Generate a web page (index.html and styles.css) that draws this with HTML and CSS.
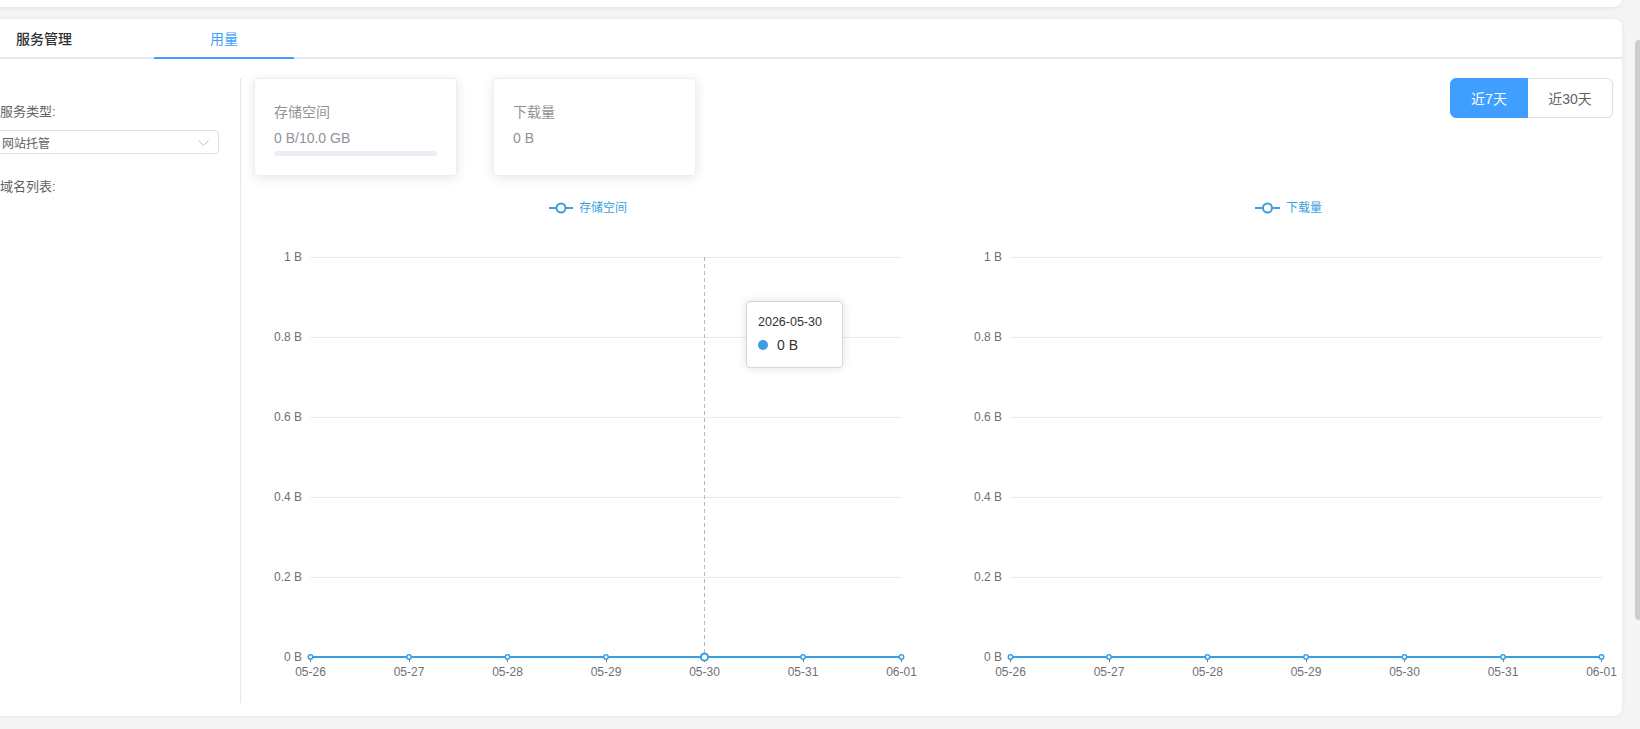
FILE: index.html
```html
<!DOCTYPE html>
<html lang="zh-CN">
<head>
    <meta charset="UTF-8">
    <meta name="viewport" content="width=device-width, initial-scale=1.0">
    <title>用量</title>
    <link rel="stylesheet" href="styles.css">
</head>
<body>
    <div class="page">
        <div class="top-card"></div>

        <div class="main-card">
            <div class="tabs">
                <div class="tab first">服务管理</div>
                <div class="tab active">用量</div>
            </div>

            <div class="usage">
                <!-- 左侧筛选 -->
                <div class="filter">
                    <div class="filter-label">服务类型:</div>
                    <div class="select">
                        <span>网站托管</span>
                        <svg class="arrow" width="11" height="6" viewBox="0 0 11 6">
                            <path d="M0.5 0.5 L5.5 5.5 L10.5 0.5" fill="none" stroke="#c0c4cc" stroke-width="1"/>
                        </svg>
                    </div>
                    <div class="filter-label domain">域名列表:</div>
                </div>

                <!-- 右侧统计 -->
                <div class="stats">
                    <div class="stats-head">
                        <div class="cards">
                            <div class="stat-card">
                                <div class="stat-title">存储空间</div>
                                <div class="stat-value">0 B/10.0 GB</div>
                                <div class="progress"><div class="progress-inner" style="width: 0%"></div></div>
                            </div>
                            <div class="stat-card">
                                <div class="stat-title">下载量</div>
                                <div class="stat-value">0 B</div>
                            </div>
                        </div>
                        <div class="range">
                            <button class="range-btn active">近7天</button>
                            <button class="range-btn">近30天</button>
                        </div>
                    </div>

                    <div class="charts">
                        <div class="chart">
                            <svg width="700" height="500" viewBox="0 0 700 500">
                                <g class="legend">
                                    <line x1="308" y1="22" x2="332" y2="22" stroke="#3a9fe0" stroke-width="2"/>
                                    <circle cx="320" cy="22" r="4.5" fill="#fff" stroke="#3a9fe0" stroke-width="2"/>
                                    <text x="338" y="26" fill="#3a9fe0" font-size="12">存储空间</text>
                                </g>
                                <g stroke="#e9e9ec" stroke-width="1">
                                    <line x1="69.5" y1="71.5" x2="660.5" y2="71.5"/>
                                    <line x1="69.5" y1="151.5" x2="660.5" y2="151.5"/>
                                    <line x1="69.5" y1="231.5" x2="660.5" y2="231.5"/>
                                    <line x1="69.5" y1="311.5" x2="660.5" y2="311.5"/>
                                    <line x1="69.5" y1="391.5" x2="660.5" y2="391.5"/>
                                </g>
                                <g class="y-labels" fill="#6e7079" font-size="12" text-anchor="end">
                                    <text x="61" y="75">1 B</text>
                                    <text x="61" y="155">0.8 B</text>
                                    <text x="61" y="235">0.6 B</text>
                                    <text x="61" y="315">0.4 B</text>
                                    <text x="61" y="395">0.2 B</text>
                                    <text x="61" y="475">0 B</text>
                                </g>
                                <!-- 悬停指示线 -->
                                <line x1="463.5" y1="71" x2="463.5" y2="471" stroke="#b5b8c0" stroke-width="1" stroke-dasharray="4 3"/>
                                <g stroke="#4a86c0" stroke-width="1">
                                    <line x1="69.5" y1="471" x2="69.5" y2="476"/>
                                    <line x1="168.5" y1="471" x2="168.5" y2="476"/>
                                    <line x1="266.5" y1="471" x2="266.5" y2="476"/>
                                    <line x1="365.5" y1="471" x2="365.5" y2="476"/>
                                    <line x1="463.5" y1="471" x2="463.5" y2="476"/>
                                    <line x1="562.5" y1="471" x2="562.5" y2="476"/>
                                    <line x1="660.5" y1="471" x2="660.5" y2="476"/>
                                </g>
                                <line x1="69.5" y1="471" x2="660.5" y2="471" stroke="#3a9fe0" stroke-width="2"/>
                                <g fill="#fff" stroke="#3a9fe0" stroke-width="1.5">
                                    <circle cx="69.5" cy="471" r="2.2"/>
                                    <circle cx="168" cy="471" r="2.2"/>
                                    <circle cx="266.5" cy="471" r="2.2"/>
                                    <circle cx="365" cy="471" r="2.2"/>
                                    <circle cx="463.5" cy="471" r="3.6" stroke-width="2"/>
                                    <circle cx="562" cy="471" r="2.2"/>
                                    <circle cx="660.5" cy="471" r="2.2"/>
                                </g>
                                <g class="x-labels" fill="#6e7079" font-size="12" text-anchor="middle">
                                    <text x="69.5" y="490">05-26</text>
                                    <text x="168" y="490">05-27</text>
                                    <text x="266.5" y="490">05-28</text>
                                    <text x="365" y="490">05-29</text>
                                    <text x="463.5" y="490">05-30</text>
                                    <text x="562" y="490">05-31</text>
                                    <text x="660.5" y="490">06-01</text>
                                </g>
                            </svg>
                            <div class="tooltip">
                                <div class="tooltip-date">2026-05-30</div>
                                <div class="tooltip-row"><span class="dot"></span>0 B</div>
                            </div>
                        </div>

                        <div class="chart">
                            <svg width="700" height="500" viewBox="0 0 700 500">
                                <g class="legend">
                                    <line x1="314" y1="22" x2="339" y2="22" stroke="#3a9fe0" stroke-width="2"/>
                                    <circle cx="326.5" cy="22" r="4.5" fill="#fff" stroke="#3a9fe0" stroke-width="2"/>
                                    <text x="345" y="26" fill="#3a9fe0" font-size="12">下载量</text>
                                </g>
                                <g stroke="#e9e9ec" stroke-width="1">
                                    <line x1="69.5" y1="71.5" x2="661" y2="71.5"/>
                                    <line x1="69.5" y1="151.5" x2="661" y2="151.5"/>
                                    <line x1="69.5" y1="231.5" x2="661" y2="231.5"/>
                                    <line x1="69.5" y1="311.5" x2="661" y2="311.5"/>
                                    <line x1="69.5" y1="391.5" x2="661" y2="391.5"/>
                                </g>
                                <g class="y-labels" fill="#6e7079" font-size="12" text-anchor="end">
                                    <text x="61" y="75">1 B</text>
                                    <text x="61" y="155">0.8 B</text>
                                    <text x="61" y="235">0.6 B</text>
                                    <text x="61" y="315">0.4 B</text>
                                    <text x="61" y="395">0.2 B</text>
                                    <text x="61" y="475">0 B</text>
                                </g>
                                <g stroke="#4a86c0" stroke-width="1">
                                    <line x1="69.5" y1="471" x2="69.5" y2="476"/>
                                    <line x1="168.5" y1="471" x2="168.5" y2="476"/>
                                    <line x1="266.5" y1="471" x2="266.5" y2="476"/>
                                    <line x1="365.5" y1="471" x2="365.5" y2="476"/>
                                    <line x1="463.5" y1="471" x2="463.5" y2="476"/>
                                    <line x1="562.5" y1="471" x2="562.5" y2="476"/>
                                    <line x1="660.5" y1="471" x2="660.5" y2="476"/>
                                </g>
                                <line x1="69.5" y1="471" x2="660.5" y2="471" stroke="#3a9fe0" stroke-width="2"/>
                                <g fill="#fff" stroke="#3a9fe0" stroke-width="1.5">
                                    <circle cx="69.5" cy="471" r="2.2"/>
                                    <circle cx="168" cy="471" r="2.2"/>
                                    <circle cx="266.5" cy="471" r="2.2"/>
                                    <circle cx="365" cy="471" r="2.2"/>
                                    <circle cx="463.5" cy="471" r="2.2"/>
                                    <circle cx="562" cy="471" r="2.2"/>
                                    <circle cx="660.5" cy="471" r="2.2"/>
                                </g>
                                <g class="x-labels" fill="#6e7079" font-size="12" text-anchor="middle">
                                    <text x="69.5" y="490">05-26</text>
                                    <text x="168" y="490">05-27</text>
                                    <text x="266.5" y="490">05-28</text>
                                    <text x="365" y="490">05-29</text>
                                    <text x="463.5" y="490">05-30</text>
                                    <text x="562" y="490">05-31</text>
                                    <text x="660.5" y="490">06-01</text>
                                </g>
                            </svg>
                        </div>
                    </div>
                </div>
            </div>
        </div>
    </div>

    <div class="scroll-track"><div class="scroll-thumb"></div></div>
</body>
</html>
```

FILE: styles.css
```css
* {
    margin: 0;
    padding: 0;
    box-sizing: border-box;
}

body {
    font-family: 'Liberation Sans', 'Noto Sans CJK SC', sans-serif;
    background: #f5f5f5;
    width: 1640px;
    height: 729px;
    overflow: hidden;
    display: flex;
    color: #606266;
}

/* 页面向左滚动了一点，卡片左边缘在视口外 */
.page {
    width: 1642px;
    flex-shrink: 0;
    margin-left: -20px;
}

.top-card {
    height: 60px;
    margin-top: -53px;
    background: #fff;
    border-radius: 0 0 8px 8px;
    box-shadow: 0 1px 4px rgba(0, 0, 0, 0.08);
}

.main-card {
    margin-top: 12px;
    height: 697px;
    background: #fff;
    border-radius: 8px;
    box-shadow: 0 0 5px rgba(0, 0, 0, 0.08);
    overflow: hidden;
    display: flex;
    flex-direction: column;
}

.tabs {
    display: flex;
    height: 40px;
    border-bottom: 2px solid #e4e7ed;
}

.tab {
    font-size: 14px;
    font-weight: 500;
    color: #303133;
    line-height: 40px;
    height: 40px;
}

.tab.first {
    padding-left: 36px;
    width: 174px;
}

.tab.active {
    width: 140px;
    text-align: center;
    color: #409eff;
    font-weight: 400;
    border-bottom: 2px solid #409eff;
    height: 40px;
    line-height: 40px;
}

.usage {
    flex: 1;
    display: flex;
    padding: 19px 0 13px;
}

.filter {
    width: 261px;
    flex-shrink: 0;
    padding: 26px 21px 0 20px;
    border-right: 1px solid #e4e7ed;
}

.filter-label {
    font-size: 13px;
    line-height: 16px;
    color: #606266;
}

.filter-label.domain {
    margin-top: 25px;
}

.select {
    margin: 10px 0 0 -10px;
    height: 24px;
    width: 229px;
    border: 1px solid #dcdfe6;
    border-radius: 4px;
    padding: 0 9px 0 11px;
    display: flex;
    align-items: center;
    justify-content: space-between;
    font-size: 12px;
    color: #606266;
}

.select .arrow {
    margin-top: 1px;
}

.stats {
    flex: 1;
    min-width: 0;
    display: flex;
    flex-direction: column;
}

.stats-head {
    display: flex;
    justify-content: space-between;
    align-items: flex-start;
    padding: 0 9px 0 13px;
}

.cards {
    display: flex;
    gap: 36px;
}

.stat-card {
    width: 203px;
    height: 98px;
    border: 1px solid #ebeef5;
    border-radius: 4px;
    box-shadow: 0 2px 12px rgba(0, 0, 0, 0.1);
    padding: 23px 19px 0;
}

.stat-title,
.stat-value {
    font-size: 14px;
    line-height: 20px;
    color: #909399;
}

.stat-value {
    margin-top: 6px;
}

.progress {
    margin-top: 3px;
    height: 5px;
    border-radius: 3px;
    background: #ebeef5;
    overflow: hidden;
}

.progress-inner {
    height: 100%;
    background: #409eff;
}

.range {
    display: flex;
}

.range-btn {
    height: 40px;
    font-family: inherit;
    font-size: 14px;
    border: 1px solid #dcdfe6;
    background: #fff;
    color: #606266;
    cursor: pointer;
}

.range-btn:first-child {
    width: 78px;
    border-radius: 6px 0 0 6px;
}

.range-btn:last-child {
    width: 85px;
    border-left: none;
    border-radius: 0 6px 6px 0;
}

.range-btn.active {
    background: #409eff;
    border-color: #409eff;
    color: #fff;
}

.charts {
    display: flex;
    margin-top: 10px;
}

.chart {
    position: relative;
    width: 700px;
    height: 500px;
    flex-shrink: 0;
}

.chart svg {
    display: block;
    font-family: 'Liberation Sans', 'Noto Sans CJK SC', sans-serif;
}

.tooltip {
    position: absolute;
    left: 505px;
    top: 115px;
    width: 97px;
    height: 67px;
    background: #fff;
    border: 1px solid #d6d6db;
    border-radius: 4px;
    box-shadow: 0 0 10px rgba(0, 0, 0, 0.12);
    padding: 12px 0 0 11px;
    color: #333;
}

.tooltip-date {
    font-size: 12.5px;
    line-height: 16px;
}

.tooltip-row {
    margin-top: 6px;
    display: flex;
    align-items: center;
    font-size: 14px;
    line-height: 18px;
}

.dot {
    width: 10px;
    height: 10px;
    border-radius: 50%;
    background: #3a9fe0;
    margin-right: 9px;
}

.scroll-track {
    width: 18px;
    flex-shrink: 0;
    padding: 40px 0 0 13px;
}

.scroll-thumb {
    width: 8px;
    height: 580px;
    border-radius: 4px;
    background: #cdcdcd;
}
```
